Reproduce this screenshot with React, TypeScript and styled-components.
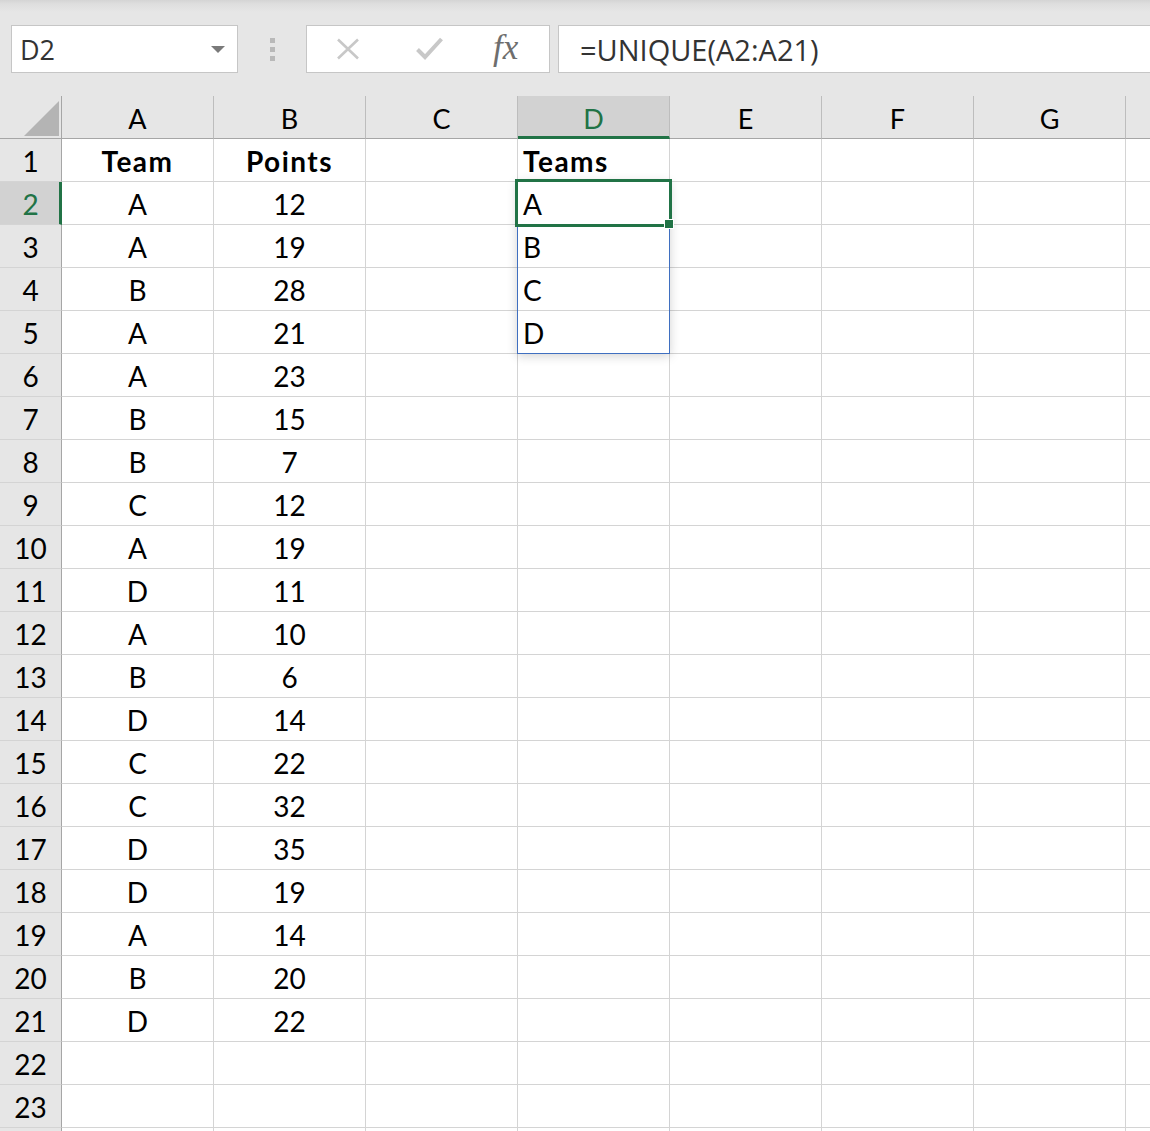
import { createGlobalStyle, styled } from "styled-components";
import { FC } from "react";

const GlobalStyle = createGlobalStyle`
  html, body {
    margin: 0;
    padding: 0;
    background: #ffffff;
    overflow: hidden;
  }
  body {
    font-family: "Lato", "Liberation Sans", sans-serif;
  }
`;

const COLUMNS = ["A", "B", "C", "D", "E", "F", "G", "H"];

const data: [string, string][] = [
  ["A", "12"],
  ["A", "19"],
  ["B", "28"],
  ["A", "21"],
  ["A", "23"],
  ["B", "15"],
  ["B", "7"],
  ["C", "12"],
  ["A", "19"],
  ["D", "11"],
  ["A", "10"],
  ["B", "6"],
  ["D", "14"],
  ["C", "22"],
  ["C", "32"],
  ["D", "35"],
  ["D", "19"],
  ["A", "14"],
  ["B", "20"],
  ["D", "22"],
];

const uniqueTeams = ["A", "B", "C", "D"];

// rows/columns that sit past the window edge keep their cells but no label
const VISIBLE_ROWS = 23;
const VISIBLE_COLS = 7;

type CellValue = { text: string; bold?: boolean; align?: "center" | "left" };

const getCell = (row: number, col: string): CellValue | null => {
  if (row === 1) {
    if (col === "A") return { text: "Team", bold: true, align: "center" };
    if (col === "B") return { text: "Points", bold: true, align: "center" };
    if (col === "D") return { text: "Teams", bold: true, align: "left" };
    return null;
  }
  const item = data[row - 2];
  if (item && col === "A") return { text: item[0], align: "center" };
  if (item && col === "B") return { text: item[1], align: "center" };
  if (col === "D" && uniqueTeams[row - 2])
    return { text: uniqueTeams[row - 2], align: "left" };
  return null;
};

const App: FC = () => {
  const rows = Array.from({ length: 24 }, (_, i) => i + 1);

  return (
    <Page>
      <GlobalStyle />
      <Toolbar>
        <NameBox>
          <NameText>D2</NameText>
          <DropArrow />
        </NameBox>
        <Grip>
          <GripDot />
          <GripDot />
          <GripDot />
        </Grip>
        <FxBox>
          <IconSlot>
            <svg width="24" height="22" viewBox="0 0 24 22">
              <path
                d="M2 1.5 L22 20.5 M22 1.5 L2 20.5"
                stroke="#c8c8c8"
                strokeWidth="2.6"
                fill="none"
              />
            </svg>
          </IconSlot>
          <IconSlot>
            <svg width="27" height="24" viewBox="0 0 27 24">
              <path
                d="M1.5 12.5 L9 20 L25.5 2"
                stroke="#c8c8c8"
                strokeWidth="4"
                fill="none"
              />
            </svg>
          </IconSlot>
          <FxLabel>fx</FxLabel>
        </FxBox>
        <FormulaInput>=UNIQUE(A2:A21)</FormulaInput>
      </Toolbar>

      <Sheet>
        <Corner>
          <CornerTriangle />
        </Corner>
        {COLUMNS.map((c, i) => (
          <ColHeader key={c} $selected={c === "D"}>
            {i < VISIBLE_COLS ? c : ""}
          </ColHeader>
        ))}
        {rows.map((r) => (
          <RowGroup key={r}>
            <RowHeader $selected={r === 2}>
              {r <= VISIBLE_ROWS ? r : ""}
            </RowHeader>
            {COLUMNS.map((c) => {
              const v = getCell(r, c);
              return (
                <Cell key={c} $bold={v?.bold} $align={v?.align ?? "center"}>
                  {v?.text}
                  {r === 2 && c === "D" && (
                    <>
                      <SpillRange />
                      <Selection>
                        <FillHandle />
                      </Selection>
                    </>
                  )}
                </Cell>
              );
            })}
          </RowGroup>
        ))}
      </Sheet>
    </Page>
  );
};

export default App;

const Page = styled.div`
  width: 1150px;
  height: 1131px;
  overflow: hidden;
  background: #ffffff;
`;

const Toolbar = styled.div`
  height: 96px;
  box-sizing: border-box;
  padding-top: 25px;
  display: flex;
  align-items: flex-start;
  background: linear-gradient(#d4d4d4 0px, #dedede 4px, #e6e6e6 12px);
`;

const NameBox = styled.div`
  margin-left: 11px;
  width: 227px;
  height: 48px;
  box-sizing: border-box;
  border: 1px solid #c6c6c6;
  background: #ffffff;
  display: flex;
  align-items: center;
  justify-content: space-between;
  padding: 0 12px 0 8px;
`;

const NameText = styled.span`
  font-family: "Open Sans", "Noto Sans", sans-serif;
  font-size: 27px;
  color: #333333;
`;

const DropArrow = styled.span`
  width: 0;
  height: 0;
  border-left: 7px solid transparent;
  border-right: 7px solid transparent;
  border-top: 7px solid #7a7a7a;
`;

const Grip = styled.div`
  width: 68px;
  height: 48px;
  display: flex;
  flex-direction: column;
  align-items: center;
  justify-content: center;
  gap: 4px;
`;

const GripDot = styled.span`
  width: 5px;
  height: 5px;
  background: #b9b9b9;
`;

const FxBox = styled.div`
  width: 244px;
  height: 48px;
  box-sizing: border-box;
  border: 1px solid #c6c6c6;
  background: #ffffff;
  display: flex;
  align-items: center;
  padding-left: 29px;
`;

const IconSlot = styled.span`
  width: 80px;
  display: flex;
  align-items: center;
`;

const FxLabel = styled.span`
  font-family: "Liberation Serif", "DejaVu Serif", serif;
  font-style: italic;
  font-size: 35px;
  line-height: 1;
  color: #6e6e6e;
  margin-left: -3px;
  margin-top: -3px;
`;

const FormulaInput = styled.div`
  margin-left: 8px;
  flex: 1;
  height: 48px;
  box-sizing: border-box;
  border: 1px solid #c6c6c6;
  border-right: none;
  background: #ffffff;
  display: flex;
  align-items: center;
  padding-left: 21px;
  font-family: "Open Sans", "Noto Sans", sans-serif;
  font-size: 29px;
  color: #333333;
`;

const Sheet = styled.div`
  display: grid;
  grid-template-columns: 62px repeat(8, 152px);
  grid-auto-rows: 43px;
`;

const RowGroup = styled.div`
  display: contents;
`;

const HeaderBase = styled.div`
  box-sizing: border-box;
  background: #e6e6e6;
  display: flex;
  align-items: center;
  justify-content: center;
  font-size: 27px;
  color: #000000;
`;

const Corner = styled(HeaderBase)`
  border-right: 1px solid #a6a6a6;
  border-bottom: 1px solid #a6a6a6;
  align-items: flex-end;
  justify-content: flex-end;
  padding: 0 2px 2px 0;
`;

const CornerTriangle = styled.span`
  width: 35px;
  height: 35px;
  background: #b4b4b4;
  clip-path: polygon(100% 0, 100% 100%, 0 100%);
`;

const ColHeader = styled(HeaderBase)<{ $selected?: boolean }>`
  border-right: 1px solid #bdbdbd;
  border-bottom: ${(p) =>
    p.$selected ? "3px solid #217346" : "1px solid #a6a6a6"};
  background: ${(p) => (p.$selected ? "#d2d2d2" : "#e6e6e6")};
  color: ${(p) => (p.$selected ? "#217346" : "#000000")};
  padding-top: ${(p) => (p.$selected ? "5px" : "3px")};
`;

const RowHeader = styled(HeaderBase)<{ $selected?: boolean }>`
  font-size: 28px;
  padding-top: 1px;
  border-right: ${(p) =>
    p.$selected ? "3px solid #217346" : "1px solid #a6a6a6"};
  border-bottom: 1px solid #d4d4d4;
  background: ${(p) => (p.$selected ? "#d2d2d2" : "#e6e6e6")};
  color: ${(p) => (p.$selected ? "#217346" : "#000000")};
  padding-left: ${(p) => (p.$selected ? "2px" : "0")};
`;

const Cell = styled.div<{ $bold?: boolean; $align: "center" | "left" }>`
  position: relative;
  box-sizing: border-box;
  border-right: 1px solid #d4d4d4;
  border-bottom: 1px solid #d4d4d4;
  font-size: 28px;
  line-height: 42px;
  padding-top: 1px;
  font-weight: ${(p) => (p.$bold ? 700 : 400)};
  letter-spacing: ${(p) => (p.$bold ? "1.5px" : "0")};
  text-align: ${(p) => p.$align};
  padding-left: ${(p) => (p.$align === "left" ? "5px" : "0")};
  color: #000000;
  white-space: nowrap;
`;

const SpillRange = styled.div`
  position: absolute;
  left: -1px;
  top: -1px;
  width: 153px;
  height: 173px;
  box-sizing: border-box;
  border: 1px solid #3f6fc0;
  box-shadow: 0 2px 10px rgba(0, 0, 0, 0.18);
  pointer-events: none;
  z-index: 1;
`;

const Selection = styled.div`
  position: absolute;
  left: -3px;
  top: -3px;
  width: 157px;
  height: 48px;
  box-sizing: border-box;
  border: 3px solid #217346;
  pointer-events: none;
  z-index: 2;
`;

const FillHandle = styled.span`
  position: absolute;
  right: -4px;
  bottom: -4px;
  width: 8px;
  height: 8px;
  background: #217346;
  border: 1px solid #ffffff;
  box-sizing: content-box;
  transform: translate(1px, 1px);
`;
